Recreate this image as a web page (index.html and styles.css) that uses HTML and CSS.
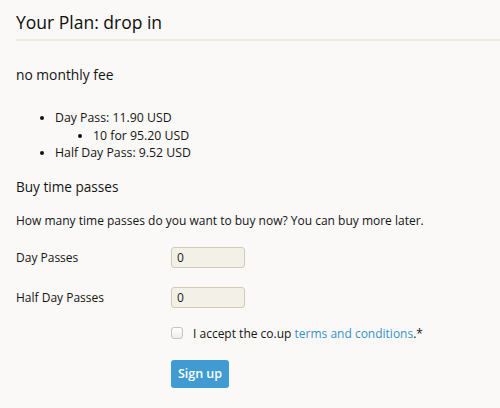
FILE: index.html
```html
<!DOCTYPE html>
<html lang="en">
<head>
<meta charset="utf-8">
<title>Your Plan</title>
<link rel="stylesheet" href="styles.css">
</head>
<body>
<div class="page">
  <h1 class="title">Your Plan: drop in</h1>
  <p class="fee">no monthly fee</p>
  <ul class="prices">
    <li>Day Pass: 11.90 USD
      <ul class="sub">
        <li>10 for 95.20 USD</li>
      </ul>
    </li>
    <li>Half Day Pass: 9.52 USD</li>
  </ul>
  <h2 class="subtitle">Buy time passes</h2>
  <p class="intro">How many time passes do you want to buy now? You can buy more later.</p>
  <form class="form">
    <label class="label" for="day">Day Passes</label>
    <input class="field" id="day" type="text" value="0">
    <label class="label" for="half">Half Day Passes</label>
    <input class="field" id="half" type="text" value="0">
    <span></span>
    <label class="accept"><input class="check" type="checkbox"><span>I accept the co.up <a class="link" href="#">terms and conditions</a>.*</span></label>
    <span></span>
    <div><button class="btn" type="button">Sign up</button></div>
  </form>
</div>
</body>
</html>
```
FILE: styles.css
```css
html, body {
  margin: 0;
  padding: 0;
  background: #faf9f7;
}
body {
  font-family: "Open Sans", "DejaVu Sans", sans-serif;
  color: #141414;
  font-size: 12px;
}
.page {
  padding-left: 16px;
}
.title {
  margin: 10px 0 0;
  font-size: 17.5px;
  line-height: 24px;
  font-weight: normal;
  color: #0d0d0d;
  padding-bottom: 5px;
  border-bottom: 2px solid #eeebe3;
}
.fee {
  margin: 24px 0 0;
  font-size: 13.8px;
  line-height: 20px;
}
.prices {
  margin: 24px 0 0;
  padding-left: 39px;
  font-size: 12.3px;
  line-height: 17.5px;
  list-style: disc;
}
.sub {
  margin: 0;
  padding-left: 38px;
  list-style: disc;
}
.subtitle {
  margin: 15px 0 0;
  font-size: 13.6px;
  line-height: 20px;
  font-weight: normal;
}
.intro {
  margin: 15px 0 0;
  line-height: 18px;
}
.form {
  margin-top: 17px;
  display: grid;
  grid-template-columns: 155px auto;
  row-gap: 19px;
  align-items: center;
}
.label {
  font-size: 12px;
  line-height: 17px;
}
.field {
  box-sizing: border-box;
  width: 74px;
  height: 21px;
  margin: 0;
  padding: 0 5px;
  border: 1px solid #d2cab6;
  border-radius: 3px;
  background: #f3f0e8;
  font-family: inherit;
  font-size: 12px;
  color: #1a1a1a;
}
.accept {
  display: flex;
  align-items: center;
  white-space: nowrap;
  height: 13px;
  line-height: 13px;
}
.check {
  appearance: none;
  -webkit-appearance: none;
  box-sizing: border-box;
  width: 12px;
  height: 12px;
  margin: 0 10px 0 0;
  border: 1px solid #c4c4c4;
  border-radius: 3px;
  background: linear-gradient(#ffffff, #ececec);
}
.link {
  color: #3592c9;
  text-decoration: none;
}
.btn {
  box-sizing: border-box;
  width: 58px;
  height: 28px;
  margin-top: 1px;
  padding: 0;
  border: none;
  border-radius: 3px;
  background: #3f9bd2;
  color: #fff;
  font-family: inherit;
  font-size: 12.5px;
  font-weight: 600;
  white-space: nowrap;
}
```
